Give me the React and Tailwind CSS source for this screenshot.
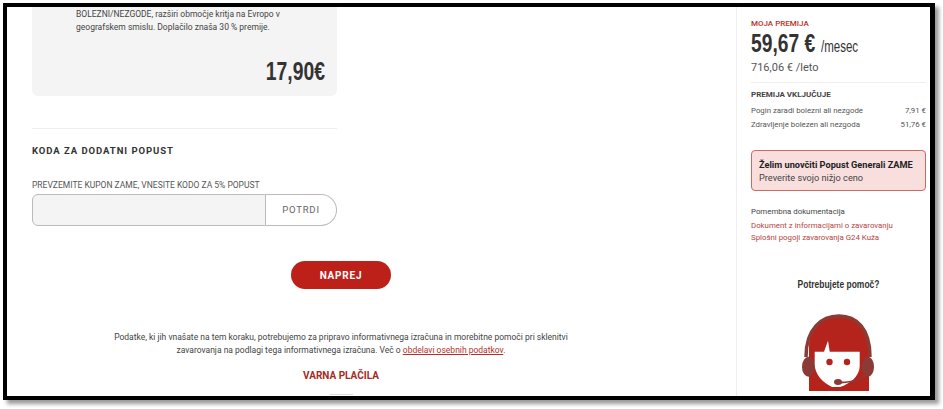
const roboto = { fontFamily: 'Roboto, sans-serif' };
const display = { fontFamily: '"Liberation Sans", sans-serif' };

function Agent() {
  return (
    <svg width="72" height="78" viewBox="0 0 72 78" className="block ml-[51px]">
      <path d="M7 77V32C7 12 20 1 37 1s30 11 30 31v45H7z" fill="#b5241c" />
      <path d="M4 43C4 14 20 2 37 2S68 14 68 43" fill="none" stroke="#8c3a35" strokeWidth="3.500" />
      <ellipse cx="6.5" cy="52.7" rx="6.5" ry="10" fill="#8c3a35" />
      <ellipse cx="66" cy="52.7" rx="6" ry="10" fill="#8c3a35" />
      <path d="M12.7 37.7H22l4-11 1.700 11h30V52c0 10-9.700 18-19.700 21h-8c-10-5-17.300-13-17.300-23z" fill="#ffffff" />
      <circle cx="27.500" cy="48" r="3.200" fill="#b5241c" />
      <circle cx="45" cy="48" r="3.200" fill="#b5241c" />
      <path d="M64 60c-4 5-12 8-25 8.500" fill="none" stroke="#8c3a35" strokeWidth="1.800" />
      <ellipse cx="36" cy="68" rx="4" ry="3" fill="#8c3a35" />
    </svg>
  );
}

export default function App() {
  return (
    <div className="w-[943px] h-[409px] bg-white overflow-hidden pl-[3px] pt-[3px]" style={roboto}>
      <div className="w-[932px] h-[397px] border-t-4 border-l-4 border-r-[5px] border-b-4 border-black shadow-[4px_4px_4px_rgba(0,0,0,0.4)] bg-white overflow-hidden flex">
        <main className="w-[729px] h-full overflow-hidden pl-[25px] shrink-0">
          <div className="w-[305px] h-[89px] bg-[#f4f4f4] rounded-b-md pl-[44px] pr-3 pt-px">
            <p className="text-[8.5px] leading-[13px] text-[#444444] w-[225px]">
              BOLEZNI/NEZGODE, razširi območje kritja na Evropo v<br />geografskem smislu. Doplačilo znaša 30 % premije.
            </p>
            <p className="text-right text-[26.5px] leading-[30px] mt-[22px] font-bold text-[#333333] whitespace-nowrap origin-right scale-x-[0.73]" style={display}>17,90€</p>
          </div>
          <div className="w-[305px] border-t border-[#eeeeee] mt-[32px] pt-[15px]">
            <h2 className="text-[9.5px] leading-[14px] font-bold tracking-[0.95px] text-[#333333] whitespace-nowrap">KODA ZA DODATNI POPUST</h2>
            <p className="text-[8.5px] leading-[12px] text-[#555555] mt-[21px] whitespace-nowrap">PREVZEMITE KUPON ZAME, VNESITE KODO ZA 5% POPUST</p>
            <div className="flex h-[32px] mt-[3px] w-[305px]">
              <div className="w-[234px] bg-[#f4f4f4] border border-[#bbbbbb] rounded-l-md" />
              <div className="flex-1 border border-l-0 border-[#bbbbbb] rounded-r-full flex items-center justify-center text-[9.5px] tracking-[0.8px] text-[#666666]">POTRDI</div>
            </div>
          </div>
          <div className="flex justify-center w-[618px] mt-[35px]">
            <div className="w-[100px] h-[28px] rounded-full bg-[#bd2019] text-white text-[10px] font-bold tracking-[0.8px] flex items-center justify-center">NAPREJ</div>
          </div>
          <p className="w-[618px] text-center text-[8.5px] leading-[13px] text-[#444444] mt-[42px]">
            Podatke, ki jih vnašate na tem koraku, potrebujemo za pripravo informativnega izračuna in morebitne pomoči pri sklenitvi<br />
            zavarovanja na podlagi tega informativnega izračuna. Več o <span className="text-[#b5302a] underline">obdelavi osebnih podatkov</span>.
          </p>
          <p className="w-[618px] text-center text-[10px] leading-[14px] font-bold text-[#a82a24] mt-[12px]">VARNA PLAČILA</p>
          <div className="w-[618px] flex justify-center mt-[11px]"><div className="w-[23px] h-px bg-[#dddddd]" /></div>
        </main>
        <aside className="flex-1 h-full border-l border-[#eeeeee] pl-[14px] overflow-hidden">
          <div className="w-[175px]">
            <p className="text-[8px] leading-[10px] font-medium text-[#bd2c26] pt-[12px]">MOJA PREMIJA</p>
            <div className="flex items-baseline h-[29px] leading-[28px] text-[#333333] whitespace-nowrap" style={display}>
              <span className="w-[70px] text-[25px] font-bold origin-left scale-x-[0.77]">59,67 €</span>
              <span className="text-[16px] origin-left scale-x-[0.72]">/mesec</span>
            </div>
            <p className="text-[11px] leading-[14px] text-[#555555] mt-[3px] pb-[7px] border-b border-[#eeeeee]">716,06 € /leto</p>
            <p className="text-[8px] leading-[10px] font-bold text-[#444444] mt-[7px]">PREMIJA VKLJUČUJE</p>
            <div className="flex justify-between text-[7.85px] leading-[13.5px] text-[#555555] mt-[4px]"><span>Pogin zaradi bolezni ali nezgode</span><span>7,91 €</span></div>
            <div className="flex justify-between text-[7.85px] leading-[13.5px] text-[#555555]"><span>Zdravljenje bolezen ali nezgoda</span><span>51,76 €</span></div>
            <div className="mt-[19px] h-[41px] bg-[#f8dfde] border border-[#c96a64] rounded-[4px] pl-[7px] pt-[7px]">
              <p className="text-[9.2px] leading-[13px] font-bold text-[#222222] whitespace-nowrap">Želim unovčiti Popust Generali ZAME</p>
              <p className="text-[9.2px] leading-[13px] text-[#444444]">Preverite svojo nižjo ceno</p>
            </div>
            <p className="text-[7.85px] leading-[12px] text-[#444444] mt-[15px]">Pomembna dokumentacija</p>
            <p className="text-[7.85px] leading-[12px] text-[#b5443e] mt-[2px]">Dokument z informacijami o zavarovanju</p>
            <p className="text-[7.85px] leading-[12px] text-[#b5443e]">Splošni pogoji zavarovanja G24 Kuža</p>
            <p className="text-[11px] leading-[14px] font-bold text-center text-[#333333] mt-[33px] whitespace-nowrap scale-x-[0.77]" style={display}>Potrebujete pomoč?</p>
            <div className="mt-[23px]"><Agent /></div>
          </div>
        </aside>
      </div>
    </div>
  );
}
